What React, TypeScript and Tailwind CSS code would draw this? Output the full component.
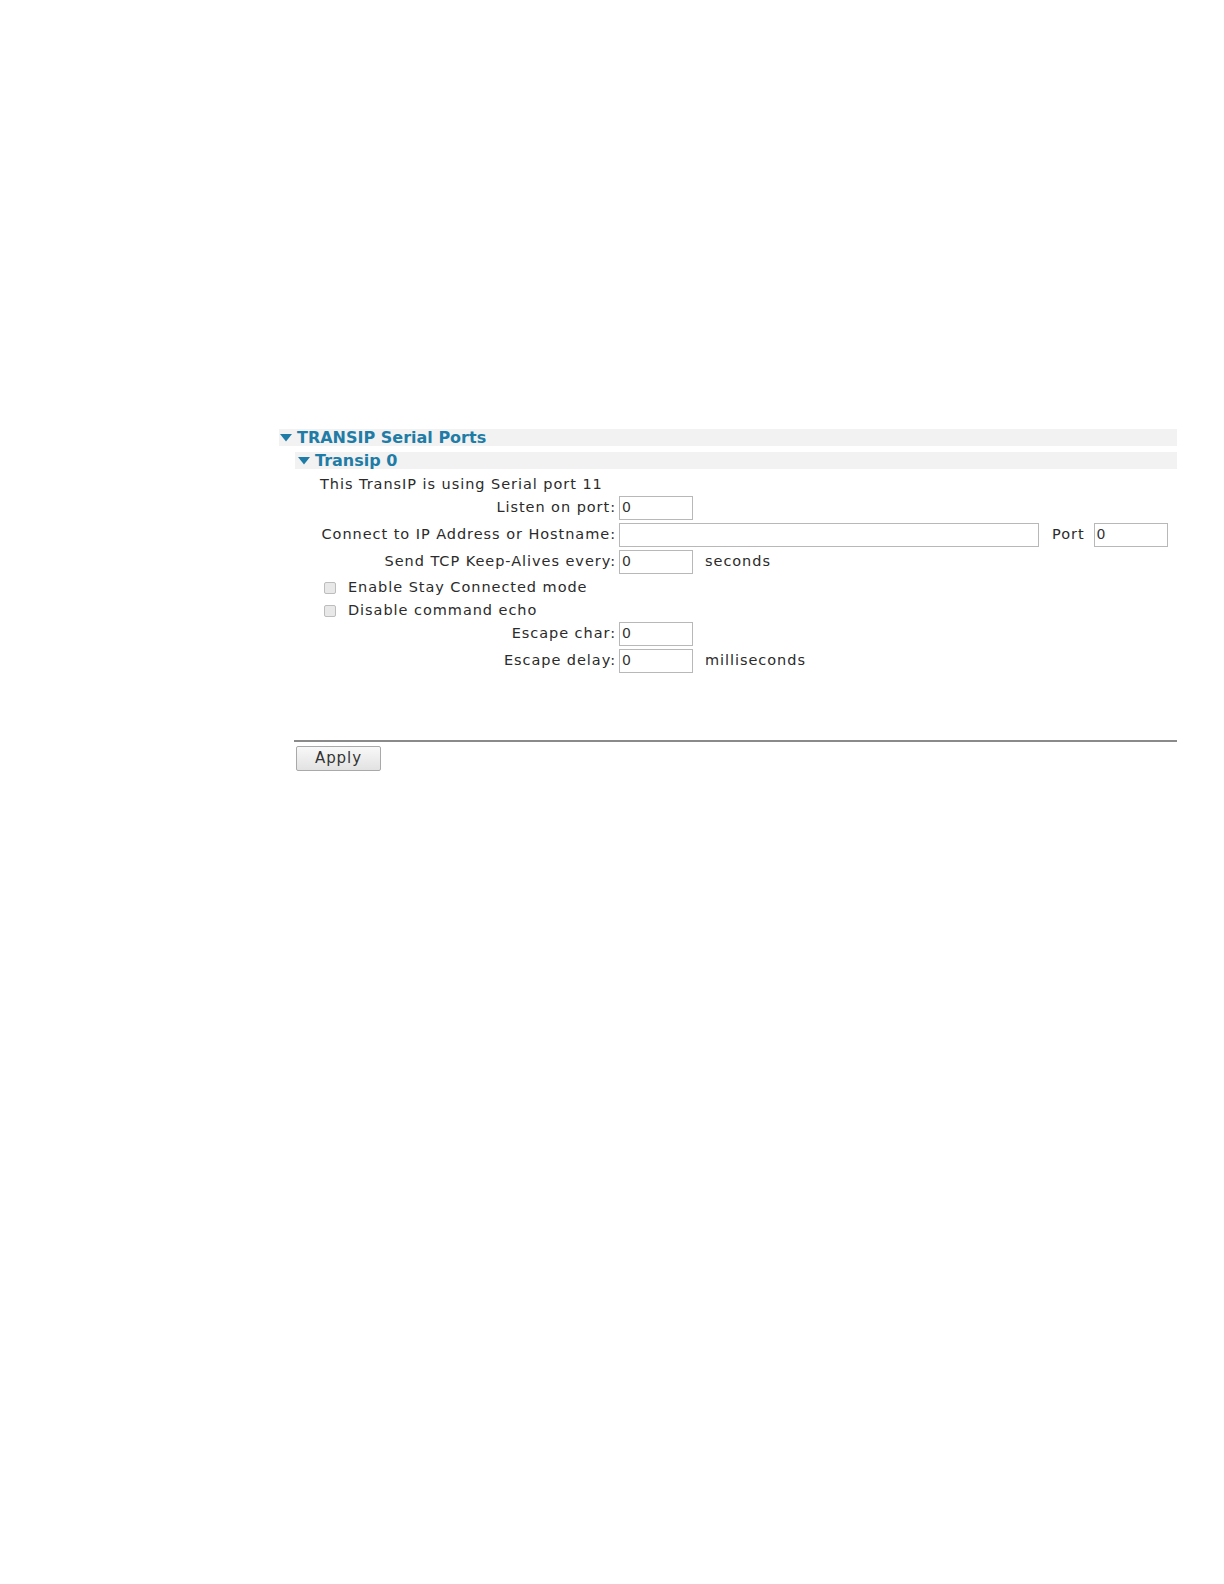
import React from 'react'

const font = { fontFamily: '"DejaVu Sans", Verdana, sans-serif' }

function Triangle() {
  return (
    <svg width="12" height="8" viewBox="0 0 12 8" className="shrink-0">
      <path d="M0 0 L12 0 L6 7.5 Z" fill="#1f7ca6" />
    </svg>
  )
}

function Field({ value = '0', w = 'w-[74px]' }: { value?: string; w?: string }) {
  return (
    <div
      className={`${w} h-[24px] border border-[#b8b8b8] bg-white px-[2px] flex items-center text-[14px] tracking-normal text-[#333]`}
    >
      {value}
    </div>
  )
}

function Row({ label, children }: { label: string; children: React.ReactNode }) {
  return (
    <div className="flex items-center h-[27px]">
      <div className="w-[301px] text-right pr-[3px] shrink-0">{label}:</div>
      <div className="flex items-center">{children}</div>
    </div>
  )
}

function Check({ label }: { label: string }) {
  return (
    <div className="flex items-center h-[23px] pl-[4px]">
      <span className="w-[12px] h-[12px] rounded-[2px] border border-[#bdbdbd] bg-[#e8e8e8] mr-[12px]" />
      <span>{label}</span>
    </div>
  )
}

export default function App() {
  return (
    <div className="min-h-screen bg-white text-[#2b2b2b] text-[14.5px] tracking-[0.95px]" style={font}>
      <div className="pt-[429px] pl-[279px]">
        <div className="w-[898px]">
          <div className="h-[17px] bg-[#f2f2f2] flex items-center gap-[5px] pl-[1px]">
            <Triangle />
            <span className="font-bold text-[#1f7ca6] text-[16px] tracking-normal">TRANSIP Serial Ports</span>
          </div>
          <div className="ml-[16px] mt-[6px]">
            <div className="h-[17px] bg-[#f2f2f2] flex items-center gap-[5px] pl-[3px]">
              <Triangle />
              <span className="font-bold text-[#1f7ca6] text-[16px] tracking-normal">Transip 0</span>
            </div>
            <div className="pl-[25px] mt-[6px]">
              <div className="h-[19px] flex items-center">This TransIP is using Serial port 11</div>
              <div className="-ml-[2px]">
                <Row label="Listen on port">
                  <Field />
                </Row>
                <Row label="Connect to IP Address or Hostname">
                  <Field value="" w="w-[420px]" />
                  <span className="ml-[13px] mr-[9px]">Port</span>
                  <Field />
                </Row>
                <Row label="Send TCP Keep-Alives every">
                  <Field />
                  <span className="ml-[12px]">seconds</span>
                </Row>
              </div>
              <div className="mt-[1px]">
                <Check label="Enable Stay Connected mode" />
                <Check label="Disable command echo" />
              </div>
              <div className="-ml-[2px] -mt-[2px]">
                <Row label="Escape char">
                  <Field />
                </Row>
                <Row label="Escape delay">
                  <Field />
                  <span className="ml-[12px]">milliseconds</span>
                </Row>
              </div>
            </div>
            <div className="mt-[66px] border-t-2 border-[#8a8a8a] -ml-[1px]" />
            <button
              className="mt-[4px] ml-[1px] w-[85px] h-[25px] border border-[#a9a9a9] rounded-[2px] bg-gradient-to-b from-[#f8f8f8] to-[#e2e2e2] text-[15px] text-[#333]"
              style={font}
            >
              Apply
            </button>
          </div>
        </div>
      </div>
    </div>
  )
}
